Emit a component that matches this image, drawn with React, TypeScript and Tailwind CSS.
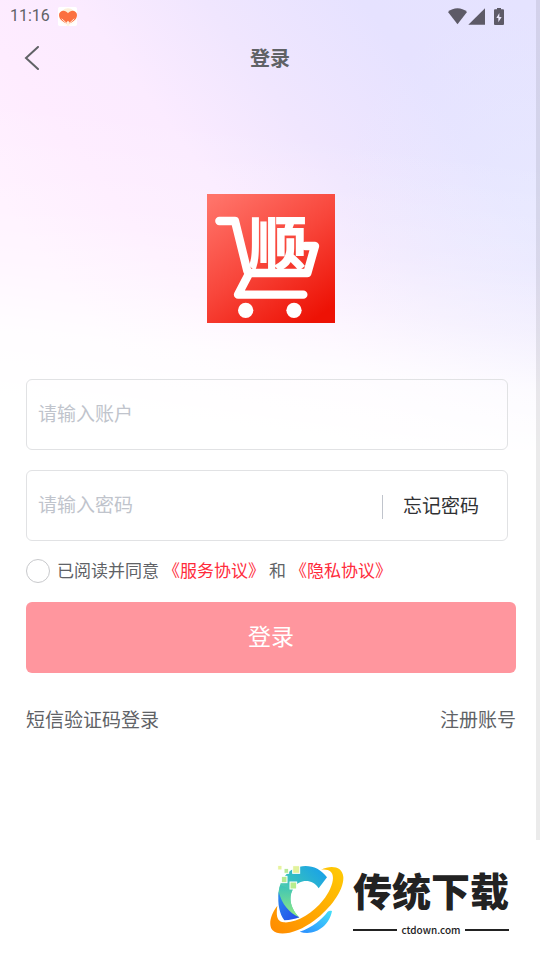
import { useState } from "react";

const bodyClass = "font-['Roboto','Noto_Sans_CJK_SC',sans-serif]";
const cjkClass = "font-['Noto_Sans_CJK_SC',sans-serif]";
const backdropClass =
  "bg-[linear-gradient(187deg,rgba(255,255,255,0)_160px,rgba(255,255,255,0.2)_270px,rgba(255,255,255,0.45)_330px,rgba(255,255,255,0.85)_390px,#fff_460px),radial-gradient(circle_at_100%_200px,rgba(232,238,255,0.45)_0,rgba(232,238,255,0)_200px),linear-gradient(53deg,#fff0ff_150px,#feecff_240px,#fbebff_330px,#f0e6fe_434px,#e6e2ff_560px,#e5e3ff_690px)] bg-[length:100%_450px] bg-no-repeat";
const fieldClass = "flex h-[71px] items-center rounded-md border border-[#e1e2e4]";
const inputClass =
  "h-full min-w-0 flex-1 rounded-md bg-transparent px-[11px] text-[19px] text-[#303133] outline-none placeholder:text-[#c0c4cc]";

function CareIcon() {
  return (
    <svg viewBox="171 18 57 57" className="h-[19px] w-[19px]" aria-hidden="true">
      <rect x="171" y="18" width="57" height="57" rx="5" fill="#fff" />
      <circle cx="201" cy="45" r="23" fill="#fdf0d8" />
      <path
        d="M201 70C190 63 174 58 174 42c0-14 19-18 27-5 8-13 27-9 27 5 0 16-16 21-27 28z"
        fill="#fb7040"
      />
      <path
        d="M176 56c3 8 11 12 18 14M226 56c-3 8-11 12-18 14M183 54l13 12M219 54l-13 12"
        fill="none"
        stroke="#fff8ef"
        strokeWidth="2.500"
        strokeLinecap="round"
      />
      <path d="M197 74V64l4-5 4 5v10z" fill="#fff3e2" />
    </svg>
  );
}

function StatusIcons() {
  return (
    <svg viewBox="144 15 171 57" className="h-[19px] w-[57px]" fill="#5d5a67" aria-hidden="true">
      <path d="M144 30c16-15 41-15 57 0l-28.500 37z" />
      <path d="M255 19v49h-50z" />
      <path d="M291 18h12v4h6q3 0 3 3v41q0 3-3 3h-24q-3 0-3-3V25q0-3 3-3h6z" />
      <path d="M298 33l-9 15h6v13l10-16h-7z" fill="#e9e6fb" />
    </svg>
  );
}

function CartLogo() {
  return (
    <svg viewBox="21 27 384 387" className="h-[129px] w-32" role="img" aria-label="顺">
      <defs>
        <linearGradient id="cart-bg" x1="0.1" y1="0" x2="0.8" y2="1">
          <stop offset="0" stopColor="#ff7369" />
          <stop offset="0.5" stopColor="#f8463b" />
          <stop offset="1" stopColor="#ed1205" />
        </linearGradient>
      </defs>
      <rect x="21" y="27" width="384" height="387" fill="url(#cart-bg)" />
      <g fill="none" stroke="#fff" strokeLinecap="round" strokeLinejoin="round">
        <path d="M58 108h47l37 150" strokeWidth="25" />
        <path d="M310 329H114l34-65h174l23-81h-29" strokeWidth="25" />
      </g>
      <circle cx="137" cy="376" r="23" fill="#fff" />
      <circle cx="282" cy="376" r="23" fill="#fff" />
      <text
        x="146"
        y="239"
        fontSize="174"
        fontWeight="900"
        fill="#fff"
        fontFamily="'Noto Sans CJK SC', sans-serif"
      >
        顺
      </text>
    </svg>
  );
}

function SwooshLogo() {
  return (
    <svg viewBox="29 90 222 210" className="h-[70px] w-[74px]" aria-hidden="true">
      <defs>
        <linearGradient id="ring" x1="0" y1="1" x2="1" y2="0">
          <stop offset="0" stopColor="#ff8a00" />
          <stop offset="1" stopColor="#ffcb05" />
        </linearGradient>
        <linearGradient id="arc-top" x1="0" y1="1" x2="1" y2="0">
          <stop offset="0" stopColor="#8be58c" />
          <stop offset="0.5" stopColor="#35bfc0" />
          <stop offset="1" stopColor="#149cf0" />
        </linearGradient>
        <linearGradient id="arc-left" x1="0" y1="0" x2="0" y2="1">
          <stop offset="0" stopColor="#3cc3b8" />
          <stop offset="1" stopColor="#93ea80" />
        </linearGradient>
        <linearGradient id="arc-side" x1="0" y1="0" x2="1" y2="1">
          <stop offset="0" stopColor="#2a8af0" />
          <stop offset="1" stopColor="#2449e8" />
        </linearGradient>
        <linearGradient id="arc-low" x1="0" y1="1" x2="1" y2="0">
          <stop offset="0" stopColor="#2a8cff" />
          <stop offset="1" stopColor="#45e0f8" />
        </linearGradient>
      </defs>
      <path
        d="M200 127C180 99 148 88 118 95 78 104 55 140 55 178c0 34 25 62 62 70-28-29-34-62-18-88 18-28 57-30 76 0z"
        fill="url(#arc-top)"
      />
      <path d="M60 150c-8 22-6 45 6 66 12 18 30 28 51 32-26-28-33-58-20-84z" fill="url(#arc-left)" />
      <path d="M55 170c-4 38 3 66 17 86 18-1 31-4 45-9-31-14-52-39-62-77z" fill="url(#arc-side)" />
      <path d="M118 290c40-14 66-36 84-60 4-3 8-3 13-2-8 46-54 77-97 62z" fill="url(#arc-low)" />
      <path
        d="M182 104c31-14 64-10 67 22 2 40-38 93-86 130-48 37-105 51-126 30-14-15-7-47 14-74-4 29-2 48 20 50 39 3 87-28 117-66 27-34 44-82 14-91-6-2-13-2-20-1z"
        fill="url(#ring)"
      />
      <g stroke="#fff" strokeWidth="3">
        <rect x="97" y="92" width="21" height="23" fill="#e2f29b" />
        <rect x="71" y="100" width="14" height="15" fill="#b5e996" />
        <rect x="63" y="124" width="17" height="19" fill="#b5ea91" />
        <rect x="89" y="141" width="20" height="21" fill="#b8ed8d" />
        <rect x="52" y="91" width="13" height="14" fill="#e7f39e" />
      </g>
    </svg>
  );
}

export default function App() {
  const [agreed, setAgreed] = useState(false);

  return (
    <div className={`${bodyClass} flex min-h-screen flex-col bg-white text-[#606266]`}>
      <div className={`${backdropClass} flex flex-1`}>
        <main className="flex min-w-0 flex-1 flex-col">
          <div className="flex h-8 items-center justify-between pl-2.5 pr-[31px]">
            <div className="flex items-center gap-2">
              <span className="text-base">11:16</span>
              <CareIcon />
            </div>
            <StatusIcons />
          </div>

          <header className="grid h-[52px] grid-cols-[1fr_auto_1fr] items-center pl-6 pr-5">
            <button type="button" aria-label="返回" className="w-4">
              <svg viewBox="0 0 16 24" className="h-6 w-4" fill="none" stroke="#606266" strokeWidth="2" strokeLinecap="round">
                <path d="M14 1 2 12l12 11" />
              </svg>
            </button>
            <h1 className="pt-0.5 text-xl font-bold">登录</h1>
          </header>

          <form className="flex flex-col pl-[26px] pr-5 pt-[110px]" onSubmit={(event) => event.preventDefault()}>
            <div className="self-center">
              <CartLogo />
            </div>

            <div className="mr-2 mt-14 flex flex-col gap-5">
              <div className={fieldClass}>
                <input type="text" aria-label="账户" placeholder="请输入账户" className={inputClass} />
              </div>
              <div className={fieldClass}>
                <input type="password" aria-label="密码" placeholder="请输入密码" className={inputClass} />
                <button type="button" className="mt-0.5 border-l border-[#c0c4cc] pl-5 pr-7 text-[19px] leading-6 text-[#303133]">
                  忘记密码
                </button>
              </div>
            </div>

            <div className="mt-[18px] flex h-6 items-center gap-[7px] text-[17px] leading-6">
              <input
                id="agree"
                type="checkbox"
                checked={agreed}
                onChange={(event) => setAgreed(event.target.checked)}
                className="h-6 w-6 shrink-0 appearance-none rounded-full border border-[#c8c9cc] bg-white checked:border-[#ff2b3b] checked:bg-[#ff2b3b]"
              />
              <p className="flex gap-1">
                <label htmlFor="agree">已阅读并同意</label>
                <a href="#service" className="text-[#ff2b3b]">《服务协议》</a>
                <span>和</span>
                <a href="#privacy" className="text-[#ff2b3b]">《隐私协议》</a>
              </p>
            </div>

            <button type="submit" className="mt-[19px] h-[71px] rounded-md bg-[#ff969e] pt-0.5 text-[23px] text-white">
              登录
            </button>

            <div className="mt-[33px] flex justify-between text-[19px] leading-[30px]">
              <a href="#sms">短信验证码登录</a>
              <a href="#register">注册账号</a>
            </div>
          </form>
        </main>
        <div className="w-1 shrink-0 bg-black/8" />
      </div>

      <footer className={`${cjkClass} flex h-30 items-center justify-end gap-[9px] pr-[31px] text-[#222]`}>
        <SwooshLogo />
        <div className="flex flex-col gap-1.5">
          <strong className="text-[39px] leading-[54px] font-black">传统下载</strong>
          <div className="flex items-center gap-1">
            <span className="h-0.5 flex-1 bg-[#222]" />
            <span className="text-[10px] leading-4 font-medium">ctdown.com</span>
            <span className="h-0.5 flex-1 bg-[#222]" />
          </div>
        </div>
      </footer>
    </div>
  );
}
